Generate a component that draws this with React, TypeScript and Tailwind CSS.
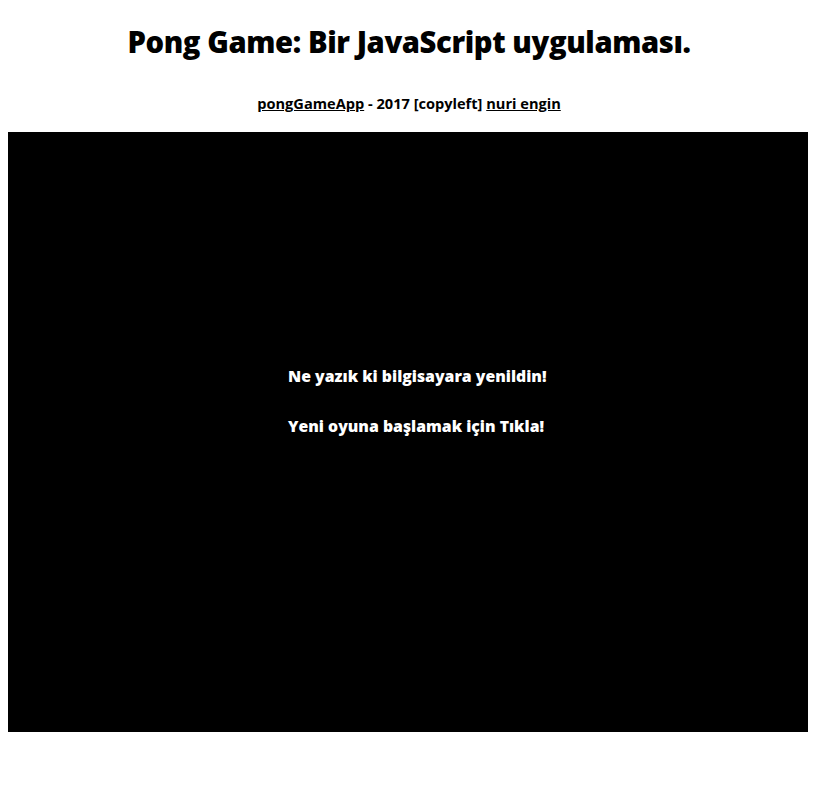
export default function App() {
  return (
    <div className="bg-white min-h-[794px] px-2" style={{ fontFamily: "'Open Sans', 'Noto Sans', sans-serif" }}>
      <h1 className="text-center text-[29.2px] font-extrabold leading-[37px] text-black pt-[24px] tracking-[-0.4px]">
        Pong Game: Bir JavaScript uygulaması.
      </h1>
      <p className="text-center text-[14.6px] font-bold leading-[18px] text-black mt-[33px]">
        <a className="underline" href="#">pongGameApp</a> - 2017 [copyleft] <a className="underline" href="#">nuri engin</a>
      </p>
      <div className="mt-[20px] w-[800px] h-[600px] bg-black text-white text-[15.8px] font-extrabold relative">
        <div className="absolute left-[280px] top-[234px] leading-[20px]">Ne yazık ki bilgisayara yenildin!</div>
        <div className="absolute left-[280px] top-[284px] leading-[20px]">Yeni oyuna başlamak için Tıkla!</div>
      </div>
    </div>
  );
}
